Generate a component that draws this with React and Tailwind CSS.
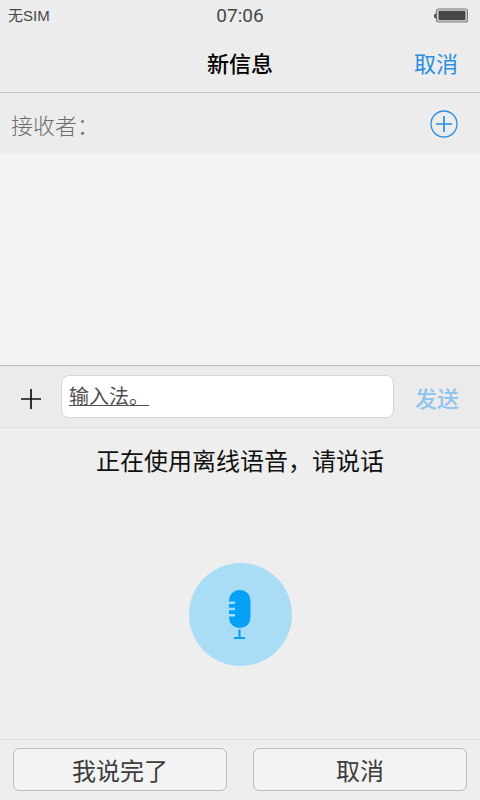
import { useState } from 'react';

function BatteryIcon() {
  return (
    <svg width="34" height="16" viewBox="0 0 34 16" aria-hidden="true">
      <path d="M2 5.5C.6 5.8 0 6.6 0 8s.6 2.200 2 2.500z" fill="#4a4a4a" />
      <rect x="2.500" y="1" width="31" height="13" rx="2" fill="#dcdcdc" stroke="#777" strokeWidth="1.200" />
      <rect x="4.500" y="2.800" width="27" height="9.500" rx="1" fill="#484848" />
    </svg>
  );
}

function AddContactIcon() {
  return (
    <svg width="28" height="28" viewBox="0 0 28 28" fill="none" stroke="#2a8fe0" aria-hidden="true">
      <circle cx="14" cy="14" r="13" strokeWidth="1.300" />
      <path d="M14 6v16M6 14h16" strokeWidth="1.700" />
    </svg>
  );
}

function PlusIcon() {
  return (
    <svg width="20" height="20" viewBox="0 0 20 20" stroke="#111" strokeWidth="1.700" aria-hidden="true">
      <path d="M10 0v20M0 10h20" />
    </svg>
  );
}

function MicIcon() {
  return (
    <svg width="24" height="50" viewBox="0 0 24 50" aria-hidden="true">
      <rect x="1" y="0" width="21.500" height="38" rx="10.500" fill="#05a1f7" />
      <path d="M0 12.700h7M0 19h7M0 25.300h7" stroke="#a9ddf6" strokeWidth="2.600" />
      <path d="M11.500 39.500v8M6 48h11" stroke="#05a1f7" strokeWidth="2.200" fill="none" />
    </svg>
  );
}

function StatusBar() {
  return (
    <div className="grid h-8 grid-cols-3 items-center font-['Liberation_Sans','Noto_Sans_CJK_SC',sans-serif] text-[#484848]">
      <span className="pl-2 text-[15px]">无SIM</span>
      <span className="text-center font-['Roboto',sans-serif] text-[19px] leading-7">07:06</span>
      <span className="flex justify-end pr-3">
        <BatteryIcon />
      </span>
    </div>
  );
}

export default function App() {
  const [recipient, setRecipient] = useState('');
  const [message, setMessage] = useState('输入法。');

  return (
    <div className="flex min-h-screen flex-col bg-[#f3f3f3] font-['Noto_Sans_CJK_SC',sans-serif]">
      {/* Header */}
      <header className="border-b border-[#c8c8c8] bg-[#ececec]">
        <StatusBar />
        <div className="grid h-[60px] grid-cols-3 items-center px-[22px]">
          <h1 className="col-start-2 text-center text-[22px] leading-8 font-medium text-black">新信息</h1>
          <button type="button" className="justify-self-end text-[22px] leading-8 text-[#2a8fe0]">
            取消
          </button>
        </div>
      </header>

      {/* Recipient */}
      <div className="flex h-[61px] items-center bg-[#ececec] pr-[22px] pl-[11px]">
        <label htmlFor="recipient" className="text-[22px] leading-8 font-light text-[#6c6c6c]">
          接收者：
        </label>
        <input
          id="recipient"
          type="text"
          className="min-w-0 flex-1 bg-transparent text-[22px] outline-none"
          value={recipient}
          onChange={e => setRecipient(e.target.value)}
        />
        <button type="button" aria-label="添加联系人">
          <AddContactIcon />
        </button>
      </div>

      {/* Conversation */}
      <main className="flex-1" />

      {/* Composer */}
      <form
        className="flex h-[62px] items-center border-t border-[#bdbdbd] bg-[#ebebeb] px-[21px]"
        onSubmit={e => e.preventDefault()}
      >
        <button type="button" aria-label="添加附件" className="mr-5 pt-1">
          <PlusIcon />
        </button>
        <input
          type="text"
          aria-label="信息"
          className="h-[43px] min-w-0 flex-1 rounded-lg border border-[#d6d6d6] bg-white px-[7px] pb-0.5 text-xl text-[#505050] underline decoration-1 underline-offset-1 outline-none"
          value={message}
          onChange={e => setMessage(e.target.value)}
        />
        <button type="submit" className="ml-[21px] text-[22px] leading-8 font-medium text-[#8fc4ee]">
          发送
        </button>
      </form>

      {/* Voice input */}
      <section className="border-t border-[#e2e2e2] bg-[#eeeeee]">
        <p className="pt-4 text-center text-2xl text-[#111]">正在使用离线语音，请说话</p>
        <div className="flex justify-center pt-[87px] pb-[73px]">
          <button
            type="button"
            aria-label="语音输入"
            className="flex size-[103px] items-center justify-center rounded-full bg-[#a9ddf6]"
          >
            <MicIcon />
          </button>
        </div>
        <div className="grid grid-cols-2 gap-[26px] border-t border-[#e0e0e0] px-[13px] pt-2 pb-[9px]">
          <button
            type="button"
            className="h-[43px] rounded-md border border-[#bcbcbc] bg-[#f3f3f3] text-2xl text-[#3c3c3c]"
          >
            我说完了
          </button>
          <button
            type="button"
            className="h-[43px] rounded-md border border-[#bcbcbc] bg-[#f3f3f3] text-2xl text-[#3c3c3c]"
          >
            取消
          </button>
        </div>
      </section>
    </div>
  );
}
